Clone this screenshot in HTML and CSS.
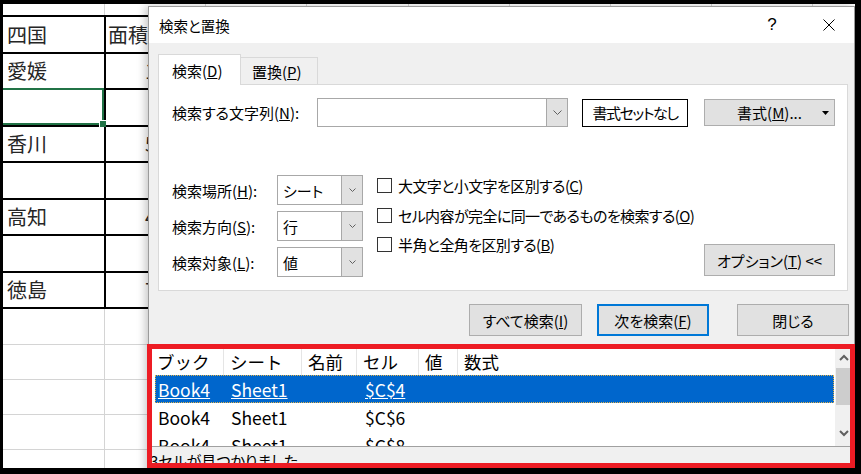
FILE: index.html
```html
<!DOCTYPE html>
<html lang="ja">
<head>
    <meta charset="UTF-8">
    <meta name="viewport" content="width=device-width, initial-scale=1.0">
    <title>検索と置換</title>
    <link rel="stylesheet" href="styles.css">
</head>
<body>
    <div class="screen">
        <!-- worksheet behind the dialog -->
        <div class="sheet">
            <div class="sheetTop">
                <span></span><span></span><span></span><span></span><span></span>
                <span></span><span></span><span></span><span></span>
            </div>
            <div class="areaTable">
                <div class="cell">四国</div><div class="cell colB">面積</div>
                <div class="cell">愛媛</div><div class="cell colB num">1,877</div>
                <div class="cell current"></div><div class="cell colB"></div>
                <div class="cell">香川</div><div class="cell colB num">5,676</div>
                <div class="cell"></div><div class="cell colB"></div>
                <div class="cell">高知</div><div class="cell colB num">4,147</div>
                <div class="cell"></div><div class="cell colB"></div>
                <div class="cell">徳島</div><div class="cell colB num">7,104</div>
            </div>
            <div class="sheetRest">
                <span class="first"></span><span class="first"></span>
                <span></span><span></span>
                <span></span><span></span>
                <span></span><span></span>
                <span></span><span></span>
            </div>
        </div>

        <!-- find & replace dialog -->
        <div class="dialog">
            <div class="titleBar">
                <div class="title">検索と置換</div>
                <div class="tbtn help">?</div>
                <div class="tbtn close">
                    <svg width="12" height="12" viewBox="0 0 12 12"><path d="M0.5 0.5 L11.5 11.5 M11.5 0.5 L0.5 11.5" stroke="#000" stroke-width="1" fill="none"/></svg>
                </div>
            </div>
            <div class="dlgBody">
                <div class="tabs">
                    <div class="tab active">検索(<u>D</u>)</div>
                    <div class="tab">置換(<u>P</u>)</div>
                </div>
                <div class="panel">
                    <div class="findRow">
                        <div class="findLabel">検索する文字列(<u>N</u>):</div>
                        <div class="combo">
                            <div class="comboField"></div>
                            <div class="comboBtn">
                                <svg width="9" height="5" viewBox="0 0 9 5"><polyline points="0.5,0.5 4.5,4.5 8.5,0.5" stroke="#606060" fill="none"/></svg>
                            </div>
                        </div>
                        <div class="btnPlain">書式セットなし</div>
                        <div class="btn btnFormat">
                            <span></span>
                            <span>書式(<u>M</u>)...</span>
                            <svg class="tri" width="7" height="4" viewBox="0 0 7 4"><polygon points="0,0 7,0 3.5,4" fill="#000"/></svg>
                        </div>
                    </div>
                    <div class="opts">
                        <div class="selCol">
                            <div class="selRow">
                                <div class="selLabel">検索場所(<u>H</u>):</div>
                                <div class="select"><div class="selValue">シート</div><div class="selBtn"><svg width="7" height="4" viewBox="0 0 7 4"><polyline points="0.5,0.5 3.5,3.5 6.5,0.5" stroke="#606060" fill="none"/></svg></div></div>
                            </div>
                            <div class="selRow">
                                <div class="selLabel">検索方向(<u>S</u>):</div>
                                <div class="select"><div class="selValue">行</div><div class="selBtn"><svg width="7" height="4" viewBox="0 0 7 4"><polyline points="0.5,0.5 3.5,3.5 6.5,0.5" stroke="#606060" fill="none"/></svg></div></div>
                            </div>
                            <div class="selRow">
                                <div class="selLabel">検索対象(<u>L</u>):</div>
                                <div class="select"><div class="selValue">値</div><div class="selBtn"><svg width="7" height="4" viewBox="0 0 7 4"><polyline points="0.5,0.5 3.5,3.5 6.5,0.5" stroke="#606060" fill="none"/></svg></div></div>
                            </div>
                        </div>
                        <div class="chkCol">
                            <div class="chk"><span class="box"></span>大文字と小文字を区別する(<u>C</u>)</div>
                            <div class="chk"><span class="box"></span>セル内容が完全に同一であるものを検索する(<u>O</u>)</div>
                            <div class="chk"><span class="box"></span>半角と全角を区別する(<u>B</u>)</div>
                        </div>
                        <div class="btn optBtn">オプション(<u>T</u>) &lt;&lt;</div>
                    </div>
                </div>
                <div class="actions">
                    <div class="btn act">すべて検索(<u>I</u>)</div>
                    <div class="btn act next">次を検索(<u>F</u>)</div>
                    <div class="btn act closeBtn">閉じる</div>
                </div>
                <div class="results">
                    <div class="list">
                        <div class="listMain">
                            <div class="lhead">
                                <div class="c1">ブック</div>
                                <div class="c2">シート</div>
                                <div class="c3">名前</div>
                                <div class="c4">セル</div>
                                <div class="c5">値</div>
                                <div class="c6">数式</div>
                            </div>
                            <div class="lrow sel">
                                <div class="c1"><u>Book4</u></div>
                                <div class="c2"><u>Sheet1</u></div>
                                <div class="c3"></div>
                                <div class="c4"><u>$C$4</u></div>
                            </div>
                            <div class="lrow">
                                <div class="c1">Book4</div>
                                <div class="c2">Sheet1</div>
                                <div class="c3"></div>
                                <div class="c4">$C$6</div>
                            </div>
                            <div class="lrow">
                                <div class="c1">Book4</div>
                                <div class="c2">Sheet1</div>
                                <div class="c3"></div>
                                <div class="c4">$C$8</div>
                            </div>
                        </div>
                        <div class="vscroll">
                            <div class="arrow"><svg width="10" height="7" viewBox="0 0 10 7"><polyline points="1,6 5,2 9,6" stroke="#606060" stroke-width="2" fill="none"/></svg></div>
                            <div class="thumb"></div>
                            <div class="spacer"></div>
                            <div class="arrow down"><svg width="10" height="7" viewBox="0 0 10 7"><polyline points="1,1 5,5 9,1" stroke="#606060" stroke-width="2" fill="none"/></svg></div>
                        </div>
                    </div>
                    <div class="status">3セルが見つかりました</div>
                </div>
            </div>
        </div>

        <div class="highlight"></div>
    </div>
</body>
</html>
```

FILE: styles.css
```css
*{
    margin: 0;
    padding: 0;
    box-sizing: border-box;
}
body{
    width: 861px;
    height: 474px;
    overflow: hidden;
    background-color: #000;
}
.screen{
    position: relative;
    width: 852px;
    height: 464px;
    margin: 4px 0 0 3px;
    background-color: #fff;
    overflow: hidden;
    font-family: "Noto Sans CJK JP", "Liberation Sans", sans-serif;
}

/* worksheet */
.sheet{
    color: #262626;
    font-size: 20px;
}
.sheetTop{
    display: grid;
    grid-template-columns: 102px repeat(8, 101.2px);
    height: 11px;
}
.sheetTop span{
    border-right: 1px solid #d4d4d4;
}
.areaTable{
    display: grid;
    grid-template-columns: 103px 101px;
    grid-auto-rows: 36.5px;
    width: 204px;
    border-top: 2px solid #000;
}
.areaTable .cell{
    position: relative;
    display: flex;
    align-items: center;
    padding-left: 4px;
    border-right: 2px solid #000;
    border-bottom: 2px solid #000;
    white-space: nowrap;
}
.areaTable .colB{
    padding-left: 2px;
}
.areaTable .num{
    justify-content: flex-end;
    padding-right: 10px;
}
.areaTable .current::before{
    content: "";
    position: absolute;
    top: -2px;
    left: -2px;
    right: 0;
    bottom: 0;
    border: 2px solid #217346;
}
.areaTable .current::after{
    content: "";
    position: absolute;
    right: -3px;
    bottom: -3px;
    width: 6px;
    height: 6px;
    background-color: #217346;
    border: 1px solid #fff;
}
.sheetRest{
    display: grid;
    grid-template-columns: 102px 101px;
    grid-template-rows: 36.3px 35px 35px 35px 35px;
}
.sheetRest span{
    border-right: 1px solid #d4d4d4;
    border-bottom: 1px solid #d4d4d4;
}

/* dialog */
.dialog{
    position: absolute;
    left: 145px;
    top: 2px;
    width: 707px;
    height: 480px;
    background-color: #f0f0f0;
    border: 1px solid #9b9b9b;
    box-shadow: -3px 0 8px rgba(0,0,0,0.22);
    font-size: 15px;
    color: #000;
    font-feature-settings: "palt";
}
.titleBar{
    display: flex;
    align-items: center;
    height: 36px;
    padding-left: 10px;
    background-color: #fff;
}
.title{
    flex: 1;
    font-size: 14.5px;
}
.tbtn{
    width: 46px;
    height: 36px;
    display: flex;
    align-items: center;
    justify-content: center;
}
.tbtn.help{
    margin-right: 11px;
    font-size: 17px;
    font-family: "Liberation Sans", sans-serif;
}
.tbtn.close{
    margin-right: 2px;
}
.dlgBody{
    padding: 11px 5px 0 9px;
}
.tabs{
    display: flex;
    align-items: flex-end;
    height: 30px;
}
.tab{
    display: flex;
    align-items: center;
    width: 77px;
    height: 27px;
    padding-left: 11px;
    border: 1px solid #d9d9d9;
    border-left: none;
    border-bottom: none;
}
.tab.active{
    position: relative;
    z-index: 1;
    width: 83px;
    height: 31px;
    margin-bottom: -1px;
    padding-left: 13px;
    background-color: #fff;
    border-left: 1px solid #d9d9d9;
}
.panel{
    width: 690px;
    height: 207px;
    padding: 13px 12px 0 13px;
    background-color: #fff;
    border: 1px solid #d9d9d9;
}
.findRow{
    display: flex;
    align-items: center;
    height: 29px;
}
.findLabel{
    width: 145px;
    white-space: nowrap;
}
.combo{
    display: flex;
    width: 251px;
    height: 29px;
    border: 1px solid #a8a8a8;
}
.comboField{
    flex: 1;
}
.comboBtn{
    width: 21px;
    display: flex;
    align-items: center;
    justify-content: center;
    background-color: #e1e1e1;
    border-left: 1px solid #a8a8a8;
}
.btnPlain{
    display: flex;
    align-items: center;
    justify-content: center;
    width: 106px;
    height: 28px;
    margin-left: 14px;
    border: 1px solid #000;
    letter-spacing: -1.4px;
}
.btn{
    display: flex;
    align-items: center;
    justify-content: center;
    background-color: #e1e1e1;
    border: 1px solid #adadad;
    white-space: nowrap;
}
.btnFormat{
    display: grid;
    grid-template-columns: 1fr auto 1fr;
    align-items: center;
    width: 131px;
    height: 27px;
    margin-left: 16px;
}
.btnFormat .tri{
    justify-self: end;
    margin-right: 5px;
}
.opts{
    display: flex;
    margin-top: 48px;
}
.selCol{
    display: flex;
    flex-direction: column;
    gap: 6px;
}
.selRow{
    display: flex;
    align-items: center;
}
.selLabel{
    width: 105px;
    white-space: nowrap;
}
.select{
    display: flex;
    width: 86px;
    height: 30px;
    border: 1px solid #a8a8a8;
}
.selValue{
    flex: 1;
    display: flex;
    align-items: center;
    padding-left: 5px;
}
.selBtn{
    width: 21px;
    display: flex;
    align-items: center;
    justify-content: center;
    background-color: #e1e1e1;
    border-left: 1px solid #a8a8a8;
}
.chkCol{
    display: flex;
    flex-direction: column;
    gap: 14.5px;
    margin-left: 14px;
    padding-top: 3px;
}
.chk{
    display: flex;
    align-items: center;
    height: 15px;
    white-space: nowrap;
    letter-spacing: -0.6px;
}
.chk .box{
    width: 15px;
    height: 15px;
    margin-right: 6px;
    border: 1px solid #333;
    background-color: #fff;
}
.optBtn{
    width: 131px;
    height: 32px;
    margin-left: auto;
    margin-bottom: 1px;
    align-self: flex-end;
}
.actions{
    display: flex;
    justify-content: flex-end;
    margin-top: 13px;
}
.act{
    width: 112px;
    height: 32px;
}
.act:first-child{
    width: 113px;
}
.act.next{
    margin-left: 15px;
    border: 2px solid #0078d7;
}
.act.closeBtn{
    margin-left: 28px;
}

/* result list */
.results{
    margin: 12px -4px 0 -7px;
}
.list{
    display: flex;
    height: 99px;
    background-color: #fff;
    border-bottom: 1px solid #a0a0a0;
    overflow: hidden;
    font-size: 17.5px;
    font-feature-settings: normal;
}
.listMain{
    flex: 1;
    min-width: 0;
}
.lhead{
    display: flex;
    height: 27px;
}
.lhead div{
    display: flex;
    align-items: center;
    padding-left: 6px;
    border-right: 1px solid #e5e5e5;
    white-space: nowrap;
}
.lhead .c1{ width: 73px; }
.lhead .c2{ width: 78px; }
.lhead .c3{ width: 55px; }
.lhead .c4{ width: 62px; }
.lhead .c5{ width: 39px; }
.lhead .c6{ flex: 1; border-right: none; }
.lrow{
    display: flex;
    height: 28px;
    margin: 0 1px 0 4px;
    border: 1px solid transparent;
}
.lrow div{
    display: flex;
    align-items: center;
    white-space: nowrap;
}
.lrow .c1{ width: 68px; padding-left: 2px; }
.lrow .c2{ width: 78px; padding-left: 7px; }
.lrow .c3{ width: 55px; }
.lrow .c4{ width: 62px; padding-left: 8px; }
.lrow.sel{
    background-color: #0066cc;
    color: #fff;
    border: 1px dotted #e2b24a;
}
.vscroll{
    display: flex;
    flex-direction: column;
    width: 18px;
    background-color: #f0f0f0;
}
.vscroll .arrow{
    display: flex;
    align-items: center;
    justify-content: center;
    height: 18px;
}
.vscroll .arrow.down{
    height: 17px;
    margin-bottom: 4px;
}
.vscroll .thumb{
    height: 37px;
    margin: 2px 1px 0 1px;
    background-color: #cdcdcd;
}
.vscroll .spacer{
    flex: 1;
}
.status{
    height: 30px;
    padding-top: 3px;
    margin-left: -1px;
    white-space: nowrap;
}

/* red annotation frame */
.highlight{
    position: absolute;
    left: 144px;
    top: 340px;
    right: 0;
    bottom: 0;
    border: 5px solid #ed1c24;
}
```
